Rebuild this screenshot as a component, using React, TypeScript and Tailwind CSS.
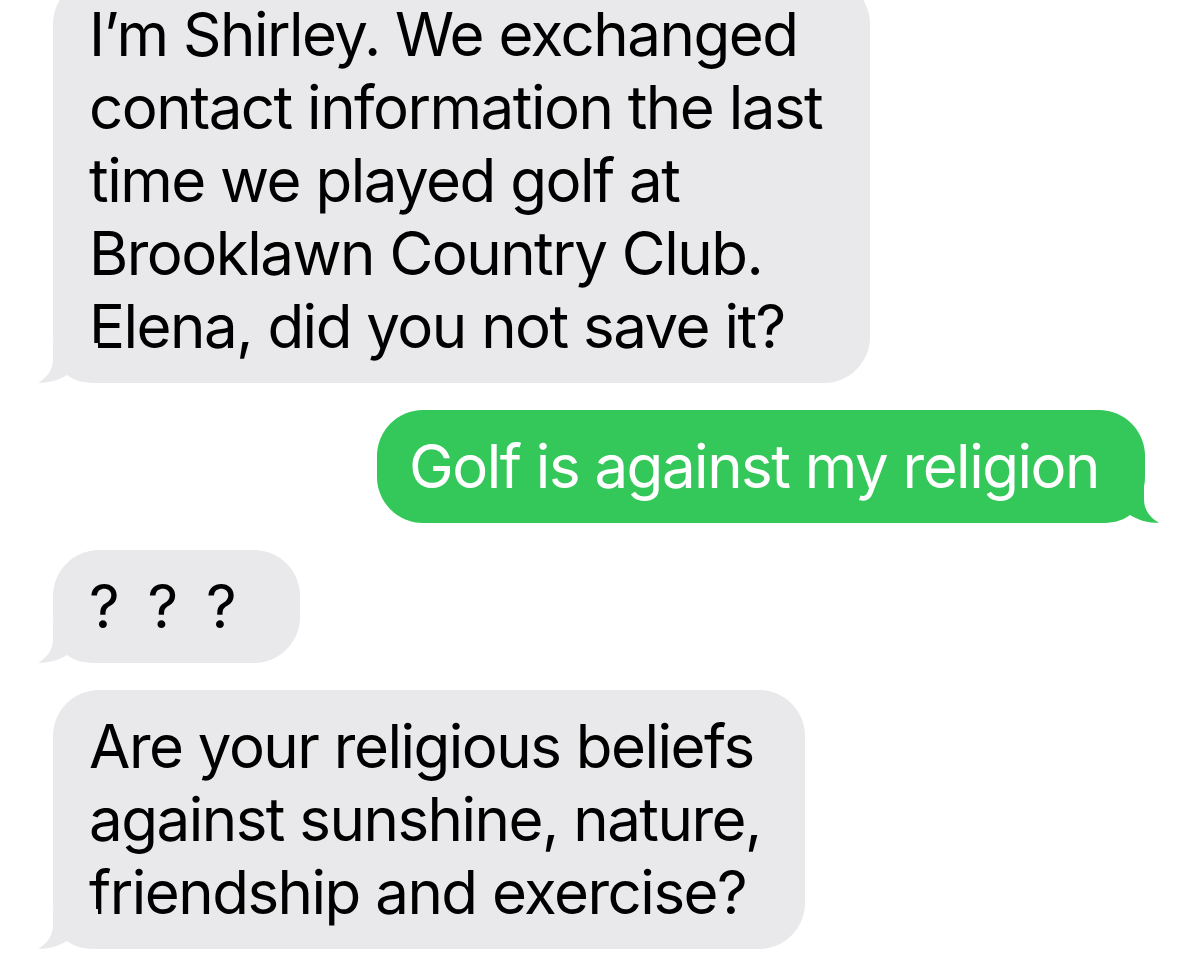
const GREY = "#e9e9eb";
const GREEN = "#34c759";

function TailLeft() {
  return (
    <svg className="absolute bottom-0 left-[-15px]" width="60" height="40" viewBox="0 0 60 40">
      <path d="M15 0 L15 16 C15 28 8 35 0 40 C11 40 21 37 29 32 C38 39 48 40 60 40 L60 0 Z" fill={GREY} />
    </svg>
  );
}

function TailRight() {
  return (
    <svg className="absolute bottom-0 right-[-14px]" width="60" height="40" viewBox="0 0 60 40">
      <path d="M45 0 L45 16 C45 28 52 35 60 40 C49 40 39 37 31 32 C22 39 12 40 0 40 L0 0 Z" fill={GREEN} />
    </svg>
  );
}

function Received({ width, children }: { width: string; children: React.ReactNode }) {
  return (
    <div className={`relative rounded-[46px] bg-[#e9e9eb] py-5 pl-[36px] text-black ${width}`}>
      {children}
      <TailLeft />
    </div>
  );
}

function Lines({ lines }: { lines: string[] }) {
  return (
    <>
      {lines.map((l, i) => (
        <div key={i} className="whitespace-nowrap">{l}</div>
      ))}
    </>
  );
}

export default function App() {
  return (
    <div
      className="h-[963px] w-[1200px] overflow-hidden bg-white text-[60px] leading-[73px] tracking-[-1.5px]"
      style={{ fontFamily: "Inter, 'Noto Sans', sans-serif" }}
    >
      <div className="-mt-[22px] flex flex-col gap-[27px] pl-[53px]">
        <Received width="w-[817px]">
          <Lines
            lines={[
              "I’m Shirley. We exchanged",
              "contact information the last",
              "time we played golf at",
              "Brooklawn Country Club.",
              "Elena, did you not save it?",
            ]}
          />
        </Received>
        <div className="flex justify-end pr-[55px]">
          <div className="relative w-[768px] rounded-[46px] bg-[#34c759] py-5 pl-[32px] text-white">
            <div className="whitespace-nowrap">Golf is against my religion</div>
            <TailRight />
          </div>
        </div>
        <Received width="w-[247px]">
          <div className="whitespace-nowrap pl-[-2px] [word-spacing:14px]">? ? ?</div>
        </Received>
        <Received width="w-[752px]">
          <Lines lines={["Are your religious beliefs", "against sunshine, nature,", "friendship and exercise?"]} />
        </Received>
      </div>
    </div>
  );
}
